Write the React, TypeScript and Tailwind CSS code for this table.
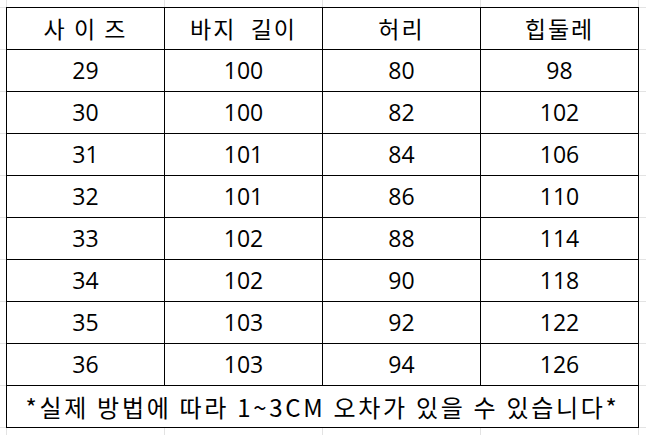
import React from "react";

const rows: [string, string, string, string][] = [
  ["29", "100", "80", "98"],
  ["30", "100", "82", "102"],
  ["31", "101", "84", "106"],
  ["32", "101", "86", "110"],
  ["33", "102", "88", "114"],
  ["34", "102", "90", "118"],
  ["35", "103", "92", "122"],
  ["36", "103", "94", "126"],
];

export default function App() {
  return (
    <div
      className="w-[646px] h-[435px] bg-white overflow-hidden pl-[6px] pt-[7px] bg-[linear-gradient(to_right,#e3e3e3_1px,transparent_1px),linear-gradient(to_bottom,#e3e3e3_1px,transparent_1px)] bg-[size:158px_42px] bg-[position:6px_7px]"
      style={{ fontFamily: '"Noto Sans CJK KR", "Noto Sans", sans-serif' }}
    >
      <table className="border-collapse bg-white text-black w-[633px] table-fixed">
        <tbody>
          <tr className="h-[42px]">
            {["사 이 즈", "바지  길이", "허리", "힙둘레"].map((h, i) => (
              <td
                key={i}
                className="border-[1.5px] border-black text-center text-[23px] leading-none tracking-[2px] whitespace-pre p-0"
              >
                {h}
              </td>
            ))}
          </tr>
          {rows.map((r, ri) => (
            <tr key={ri} className="h-[42px]">
              {r.map((c, ci) => (
                <td
                  key={ci}
                  className="border-[1.5px] border-black text-center text-[23px] leading-none p-0"
                  style={{ fontFamily: '"Open Sans", "Noto Sans", sans-serif' }}
                >
                  {c}
                </td>
              ))}
            </tr>
          ))}
          <tr className="h-[42px]">
            <td
              colSpan={4}
              className="border-[1.5px] border-black text-center text-[24px] leading-none tracking-[2.7px] whitespace-pre p-0"
            >
              {"*실제 방법에 따라 1~3CM 오차가 있을 수 있습니다*"}
            </td>
          </tr>
        </tbody>
      </table>
    </div>
  );
}
